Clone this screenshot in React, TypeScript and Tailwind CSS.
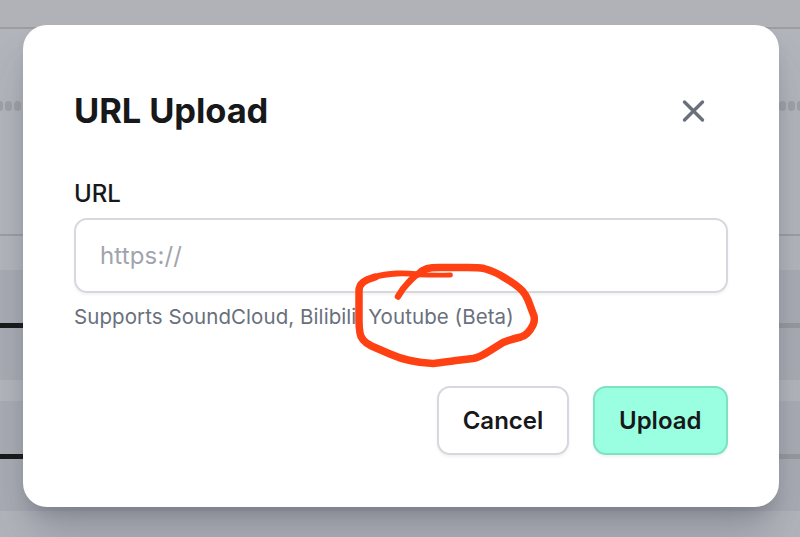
const dot = "h-[10px] w-[7px] shrink-0 rounded-full bg-[#9fa0a7]";

function Track({ gap }: { gap: string }) {
  return (
    <div className={`flex h-[110px] shrink-0 items-center bg-[#a8abb3] ${gap}`}>
      <div className="h-[5px] w-1/2 bg-[#17181a]" />
      <div className="h-[5px] w-1/2 bg-[#96989f]" />
    </div>
  );
}

function Backdrop() {
  return (
    <div className="absolute inset-0 flex flex-col bg-[#b1b4bb]">
      <div className="h-[29px] shrink-0 border-b-2 border-[#9c9da3] bg-[#b1b2b7]" />
      <div className="flex h-[207px] shrink-0 items-start justify-between border-b-2 border-[#9c9da3] pt-[72px]">
        <div className="-ml-1 flex gap-[2px]">
          <div className={dot} />
          <div className={dot} />
          <div className={dot} />
        </div>
        <div className="-mr-1 flex gap-[2px]">
          <div className={dot} />
          <div className={dot} />
          <div className={dot} />
        </div>
      </div>
      <Track gap="mt-[34px]" />
      <Track gap="mt-[21px]" />
    </div>
  );
}

export default function App() {
  return (
    <div className="relative flex h-[537px] w-[800px] overflow-hidden font-['Inter',sans-serif] text-[#17181a]">
      <Backdrop />
      <main className="relative ml-[22.5px] mt-[25px] flex h-[482px] w-[756.5px] flex-col rounded-[24px] bg-white pl-[51.5px] pr-[52px] shadow-[0_33px_42px_-8px_rgba(60,66,80,0.28),0_10px_16px_-6px_rgba(60,66,80,0.24)]">
        <header className="mt-[62px] flex h-[48px] items-center justify-between">
          <h1 className="text-[34.5px] font-bold leading-[48px] tracking-[-0.1px]">URL Upload</h1>
          <button aria-label="Close" className="mr-[22px] text-[#69707c]">
            <svg width="24" height="24" viewBox="0 0 24 24" fill="none" stroke="currentColor" strokeWidth="3.4" strokeLinecap="round">
              <path d="M3.500 3 21.500 21M21.500 3 3.500 21" />
            </svg>
          </button>
        </header>
        <label className="mt-[42px] text-[24px] font-medium leading-[34px]">URL</label>
        <input
          placeholder="https://"
          className="mt-[7px] h-[75px] w-[653.5px] shrink-0 rounded-[13px] border-2 border-[#d7d8de] px-[24px] text-[24px] tracking-[0.15px] shadow-[0_2px_3px_rgba(0,0,0,0.05)] outline-none placeholder:text-[#a1a4ae]"
        />
        <p className="mt-[7px] whitespace-pre text-[20.5px] leading-[33px] tracking-[0.07px] text-[#69707c]">Supports SoundCloud, Bilibili, Youtube (Beta)</p>
        <footer className="mt-[53px] flex w-[653.5px] justify-end gap-[24px]">
          <button className="h-[69px] w-[132px] rounded-[13px] border-2 border-[#d7d8de] bg-white text-[24px] font-semibold shadow-[0_2px_3px_rgba(0,0,0,0.06)]">Cancel</button>
          <button className="h-[69px] w-[134.5px] rounded-[13px] border-2 border-[#7be3c0] bg-[#99ffe0] text-[24px] font-semibold shadow-[0_2px_3px_rgba(0,0,0,0.06)]">Upload</button>
        </footer>
      </main>
      <svg className="pointer-events-none absolute inset-0" width="800" height="537" fill="none" stroke="#ff4013" strokeLinecap="round" strokeLinejoin="round">
        <path strokeWidth="4.8" d="M450.500 275Q434 275.500 413 274.500" />
        <path strokeWidth="6" d="M418 274.500Q407 273 397 273.500Q384 274 373 277.500" />
        <path strokeWidth="6.500" d="M398 296.500Q402 289 408 283Q416 274 424 270" />
        <path strokeWidth="7.500" d="M422 271Q427 268 432 267.800L440 267.500L463 267.500Q478 267.300 484 268.500Q495 271.500 505 278Q517 285 522.500 291Q526 295 528 300L534 316Q535 321 533 325Q528 335 521 337Q510 339.500 503 342.500L487 352.500Q479 357.500 473 358.500L456 360.500Q435 363.500 433 363.500Q421 363 410 360.500Q400 358.500 390 354L371.500 346Q361 341 360 333Q359 327 359 321L359 291C359 283 365 280 375 277" />
      </svg>
    </div>
  );
}
